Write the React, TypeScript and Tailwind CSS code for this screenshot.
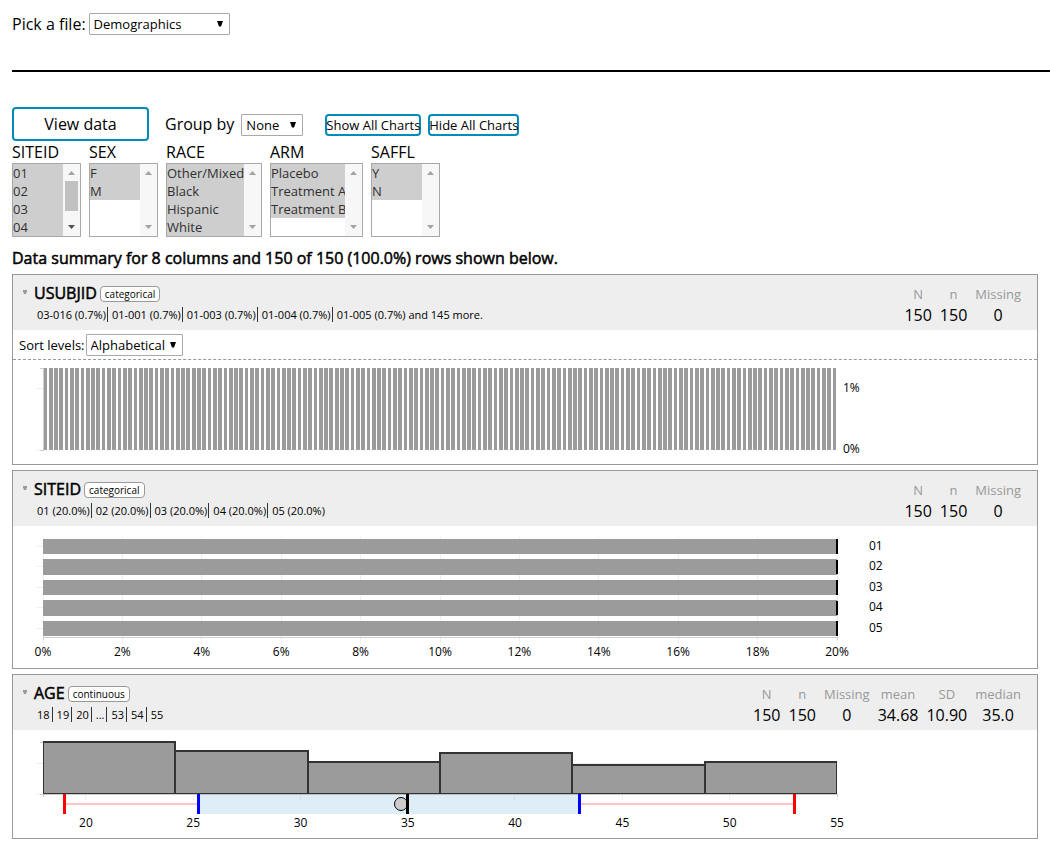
import { useState } from "react";
import type { ReactNode } from "react";

const BAR = "#9b9b9b";
const GRID = "#eeeeee";
const AXIS = "#cccccc";
const PLOT_WIDTH = 794;

type Stat = { label: string; value: string };

const baseStats: Stat[] = [
  { label: "N", value: "150" },
  { label: "n", value: "150" },
  { label: "Missing", value: "0" },
];

const ageStats: Stat[] = [
  ...baseStats,
  { label: "mean", value: "34.68" },
  { label: "SD", value: "10.90" },
  { label: "median", value: "35.0" },
];

function Dropdown({ id, options, width }: { id: string; options: string[]; width: string }) {
  return (
    <span className={`relative inline-flex ${width}`}>
      <select
        id={id}
        className="h-[22px] w-full appearance-none rounded-[1px] border border-[#a9a9a9] bg-white pl-1 text-[13px] leading-5 text-black"
      >
        {options.map((o) => (
          <option key={o}>{o}</option>
        ))}
      </select>
      <svg className="pointer-events-none absolute top-2 right-[7px]" width="6" height="6" viewBox="0 0 6 6" aria-hidden="true">
        <path d="M0 0H6L4 5.5H2Z" fill="#000" />
      </svg>
    </span>
  );
}

function FilterList({
  label,
  options,
  width,
  scrollable = false,
}: {
  label: string;
  options: string[];
  width: string;
  scrollable?: boolean;
}) {
  const id = `filter-${label.toLowerCase()}`;
  return (
    <div className="flex flex-col">
      <label htmlFor={id} className="h-[22px] leading-[22px]">
        {label}
      </label>
      <div className={`flex h-[74px] border border-[#a9a9a9] bg-white ${width}`}>
        <select
          id={id}
          multiple
          size={4}
          defaultValue={options}
          className="h-[72px] min-w-0 flex-1 appearance-none overflow-y-auto text-[13px] [scrollbar-width:none] focus:outline-none"
        >
          {options.map((o) => (
            <option
              key={o}
              className="h-[18px] min-h-[18px] p-0 leading-[18px] text-[#303030] checked:bg-[#cecece] checked:bg-linear-to-r checked:from-[#cecece] checked:to-[#cecece]"
            >
              {o}
            </option>
          ))}
        </select>
        <div className="flex w-[17px] flex-col items-center bg-[#f7f7f7] pt-[7px] pb-[7px]" aria-hidden="true">
          <svg width="7" height="4" viewBox="0 0 7 4">
            <path d="M0 4L3.5 0L7 4Z" fill="#a3a3a3" />
          </svg>
          {scrollable && <div className="mt-[6px] h-[30px] w-[13px] bg-[#c1c1c1]" />}
          <svg className="mt-auto" width="7" height="4" viewBox="0 0 7 4">
            <path d="M0 0H7L3.5 4Z" fill={scrollable ? "#505050" : "#a3a3a3"} />
          </svg>
        </div>
      </div>
    </div>
  );
}

function VariableCard({
  name,
  type,
  values,
  suffix,
  stats,
  controls,
  children,
}: {
  name: string;
  type: "categorical" | "continuous";
  values: string[];
  suffix?: string;
  stats: Stat[];
  controls?: ReactNode;
  children: ReactNode;
}) {
  const [open, setOpen] = useState(true);
  const divider =
    type === "categorical" ? "mr-1 border-r border-[#333333] pr-px" : "mr-1 border-r border-[#333333] pr-[2px]";
  return (
    <section className="border border-[#999999] bg-white">
      <header className="flex h-[55px] justify-between bg-[#eeeeee] pr-4">
        <div>
          <div className="flex h-[30px] items-center pt-2">
            <button
              type="button"
              aria-label={`Toggle ${name}`}
              aria-expanded={open}
              onClick={() => setOpen(!open)}
              className="flex h-5 w-[21px] items-start pt-[6px] pl-[9px]"
            >
              <svg width="6" height="5" viewBox="0 0 6 5">
                <path d="M1 0H5V1.5L4 4H2L1 1.5Z" fill="#999" />
              </svg>
            </button>
            <h2 className="pb-[2px] text-[16px] leading-5 font-normal [-webkit-text-stroke:0.5px_black]">{name}</h2>
            <span className="ml-[3px] h-4 rounded-[4px] border border-[#999999] bg-white px-1 text-[10px] leading-[14px]">
              {type}
            </span>
          </div>
          <ul className="flex pt-[2px] pl-6 text-[11px] leading-[15px]">
            {values.map((v, i) => (
              <li key={v} className={i < values.length - 1 ? divider : ""}>
                {v}
                {i === values.length - 1 && suffix ? ` ${suffix}` : ""}
              </li>
            ))}
          </ul>
        </div>
        <dl className="flex gap-2 pt-[10px] text-center">
          {stats.map((s) => (
            <div key={s.label}>
              <dt className="text-[13px] leading-[18px] text-[#999999]">{s.label}</dt>
              <dd className="text-[16px] leading-6">{s.value}</dd>
            </div>
          ))}
        </dl>
      </header>
      {open && controls}
      {open && children}
    </section>
  );
}

function SubjectChart() {
  const bars = Array.from({ length: 150 }, (_, i) => 0.5 + i * 5.296);
  return (
    <svg className="block" width="900" height="104" shapeRendering="crispEdges" fontSize="12" role="img" aria-label="USUBJID levels">
      <g transform="translate(30 8)">
        <path d="M-6 20.5H0M-6 82.5H0" stroke={GRID} />
        <path d="M-3 0.5H0.5V82.5H-3" stroke={AXIS} fill="none" />
        {bars.map((x) => (
          <rect key={x} x={x} y="0" width="3.72" height="82" fill={BAR} />
        ))}
        <text x="800" y="24">1%</text>
        <text x="800" y="85">0%</text>
      </g>
    </svg>
  );
}

function SiteChart() {
  const sites = ["01", "02", "03", "04", "05"];
  const ticks = [0, 2, 4, 6, 8, 10, 12, 14, 16, 18, 20];
  return (
    <svg className="block" width="900" height="142" shapeRendering="crispEdges" fontSize="12" role="img" aria-label="SITEID levels">
      <g transform="translate(30 11)">
        {ticks.map((t) => (
          <g key={t}>
            <rect x={Math.floor((t / 20) * PLOT_WIDTH)} y="0" width="1" height="107" fill={GRID} />
            <text x={(t / 20) * PLOT_WIDTH} y="119" textAnchor="middle">{`${t}%`}</text>
          </g>
        ))}
        <path d={`M0.5 103V100.5H${PLOT_WIDTH + 0.5}V103`} stroke={AXIS} fill="none" />
        {sites.map((s, i) => (
          <g key={s}>
            <rect x="-6" y={Math.floor(9 + i * 20.5)} width="6" height="1" fill={GRID} />
            <rect x="0" y={1.9 + i * 20.5} width={PLOT_WIDTH} height="15.4" fill={BAR} />
            <rect x={PLOT_WIDTH - 1} y={2.4 + i * 20.5} width="2" height="14.4" fill="#000" />
            <text x="826" y={Math.floor(13 + i * 20.5)}>{s}</text>
          </g>
        ))}
      </g>
    </svg>
  );
}

function AgeChart() {
  const tops = [1, 10, 21, 12, 24, 21];
  const binWidth = PLOT_WIDTH / tops.length;
  const scale = (v: number) => ((v - 18) / 37) * PLOT_WIDTH;
  const ticks = [20, 25, 30, 35, 40, 45, 50, 55];
  return (
    <svg className="block" width="900" height="108" shapeRendering="crispEdges" fontSize="12" role="img" aria-label="AGE distribution">
      <defs>
        <clipPath id="age-plot">
          <rect x="0" y="-1" width={PLOT_WIDTH} height="54" />
        </clipPath>
      </defs>
      <g transform="translate(30 12)">
        <path d={`M-6 21.5H${PLOT_WIDTH}M-6 52.5H0`} stroke={GRID} />
        <path d="M-3 0.5H0.5V52.5H-3" stroke={AXIS} fill="none" />
        {ticks.map((t) => (
          <g key={t}>
            <rect x={Math.floor(scale(t))} y="53" width="1" height="5" fill={GRID} />
            <text x={scale(t)} y="85" textAnchor="middle">{t}</text>
          </g>
        ))}
        <path d={`M0.5 55V52.5H${PLOT_WIDTH + 0.5}V55`} stroke={AXIS} fill="none" />
        <g clipPath="url(#age-plot)">
          {tops.map((y, i) => (
            <rect
              key={i}
              x={Math.round(i * binWidth)}
              y={y - 1}
              width={Math.round((i + 1) * binWidth) - Math.round(i * binWidth)}
              height={53 - y}
              fill={BAR}
              stroke="#333"
              strokeWidth="2"
            />
          ))}
        </g>
        <rect x="0" y="52" width={PLOT_WIDTH} height="1" fill={AXIS} />
        <rect x="21" y="61" width="730" height="2" fill="#ffc5c5" />
        <rect x="155" y="52" width="381" height="20" fill="#ddeef6" />
        <path d="M157 52.5H535" stroke="#b4c2c8" />
        <path d="M257.5 53V58M471.5 53V58" stroke="#cfdfe7" />
        <rect x="20" y="52" width="3" height="20" fill="#f00" />
        <rect x="154" y="52" width="3" height="20" fill="#00f" />
        <rect x="535" y="52" width="3" height="20" fill="#00f" />
        <rect x="750" y="52" width="3" height="20" fill="#f00" />
        <circle cx="358" cy="62" r="6.5" fill="#ccc" stroke="#000" shapeRendering="auto" />
        <rect x="363" y="52" width="3" height="20" fill="#000" />
      </g>
    </svg>
  );
}

const chartButton =
  "flex h-[22px] items-center justify-center rounded-[4px] border-2 border-[#008cba] bg-white text-[13px] leading-[18px] whitespace-nowrap";

export default function App() {
  return (
    <main className="bg-white pl-3 font-['Open_Sans','Noto_Sans',sans-serif] text-[16px] leading-[22px] text-black">
      <div className="flex items-center gap-[3px] pt-[13px]">
        <label htmlFor="file-picker">Pick a file:</label>
        <Dropdown id="file-picker" options={["Demographics"]} width="w-[141px]" />
      </div>
      <hr className="mt-[35px] mb-[35px] border-t-2 border-black" />

      <div className="pr-3">
        <div className="flex items-center">
          <button
            type="button"
            className="h-[34px] w-[137px] rounded-[4px] border-2 border-[#008cba] bg-white text-[16px]"
          >
            View data
          </button>
          <label htmlFor="group-by" className="ml-4">
            Group by
          </label>
          <div className="ml-[7px] flex items-center pt-[2px]">
            <Dropdown id="group-by" options={["None", "SEX", "RACE", "ARM"]} width="w-[62px]" />
            <button type="button" className={`ml-[22px] w-24 ${chartButton}`}>
              Show All Charts
            </button>
            <button type="button" className={`ml-[7px] w-[91px] ${chartButton}`}>
              Hide All Charts
            </button>
          </div>
        </div>

        <div className="flex gap-2">
          <FilterList label="SITEID" options={["01", "02", "03", "04", "05"]} width="w-[69px]" scrollable />
          <FilterList label="SEX" options={["F", "M"]} width="w-[69px]" />
          <FilterList label="RACE" options={["Other/Mixed", "Black", "Hispanic", "White"]} width="w-24" />
          <FilterList label="ARM" options={["Placebo", "Treatment A", "Treatment B"]} width="w-[93px]" />
          <FilterList label="SAFFL" options={["Y", "N"]} width="w-[69px]" />
        </div>

        <p className="mt-[10px] mb-[5px] [-webkit-text-stroke:0.5px_black]">
          Data summary for 8 columns and 150 of 150 (100.0%) rows shown below.
        </p>

        <div className="flex flex-col gap-[5px]">
          <VariableCard
            name="USUBJID"
            type="categorical"
            values={["03-016 (0.7%)", "01-001 (0.7%)", "01-003 (0.7%)", "01-004 (0.7%)", "01-005 (0.7%)"]}
            suffix="and 145 more."
            stats={baseStats}
            controls={
              <div className="flex h-[30px] items-center gap-px border-b border-dashed border-[#999999] pl-[6px] text-[13px]">
                <label htmlFor="sort-levels">Sort levels:</label>
                <Dropdown id="sort-levels" options={["Alphabetical", "Ascending", "Descending"]} width="w-[97px]" />
              </div>
            }
          >
            <SubjectChart />
          </VariableCard>
          <VariableCard
            name="SITEID"
            type="categorical"
            values={["01 (20.0%)", "02 (20.0%)", "03 (20.0%)", "04 (20.0%)", "05 (20.0%)"]}
            stats={baseStats}
          >
            <SiteChart />
          </VariableCard>
          <VariableCard
            name="AGE"
            type="continuous"
            values={["18", "19", "20", "...", "53", "54", "55"]}
            stats={ageStats}
          >
            <AgeChart />
          </VariableCard>
        </div>
      </div>
    </main>
  );
}
